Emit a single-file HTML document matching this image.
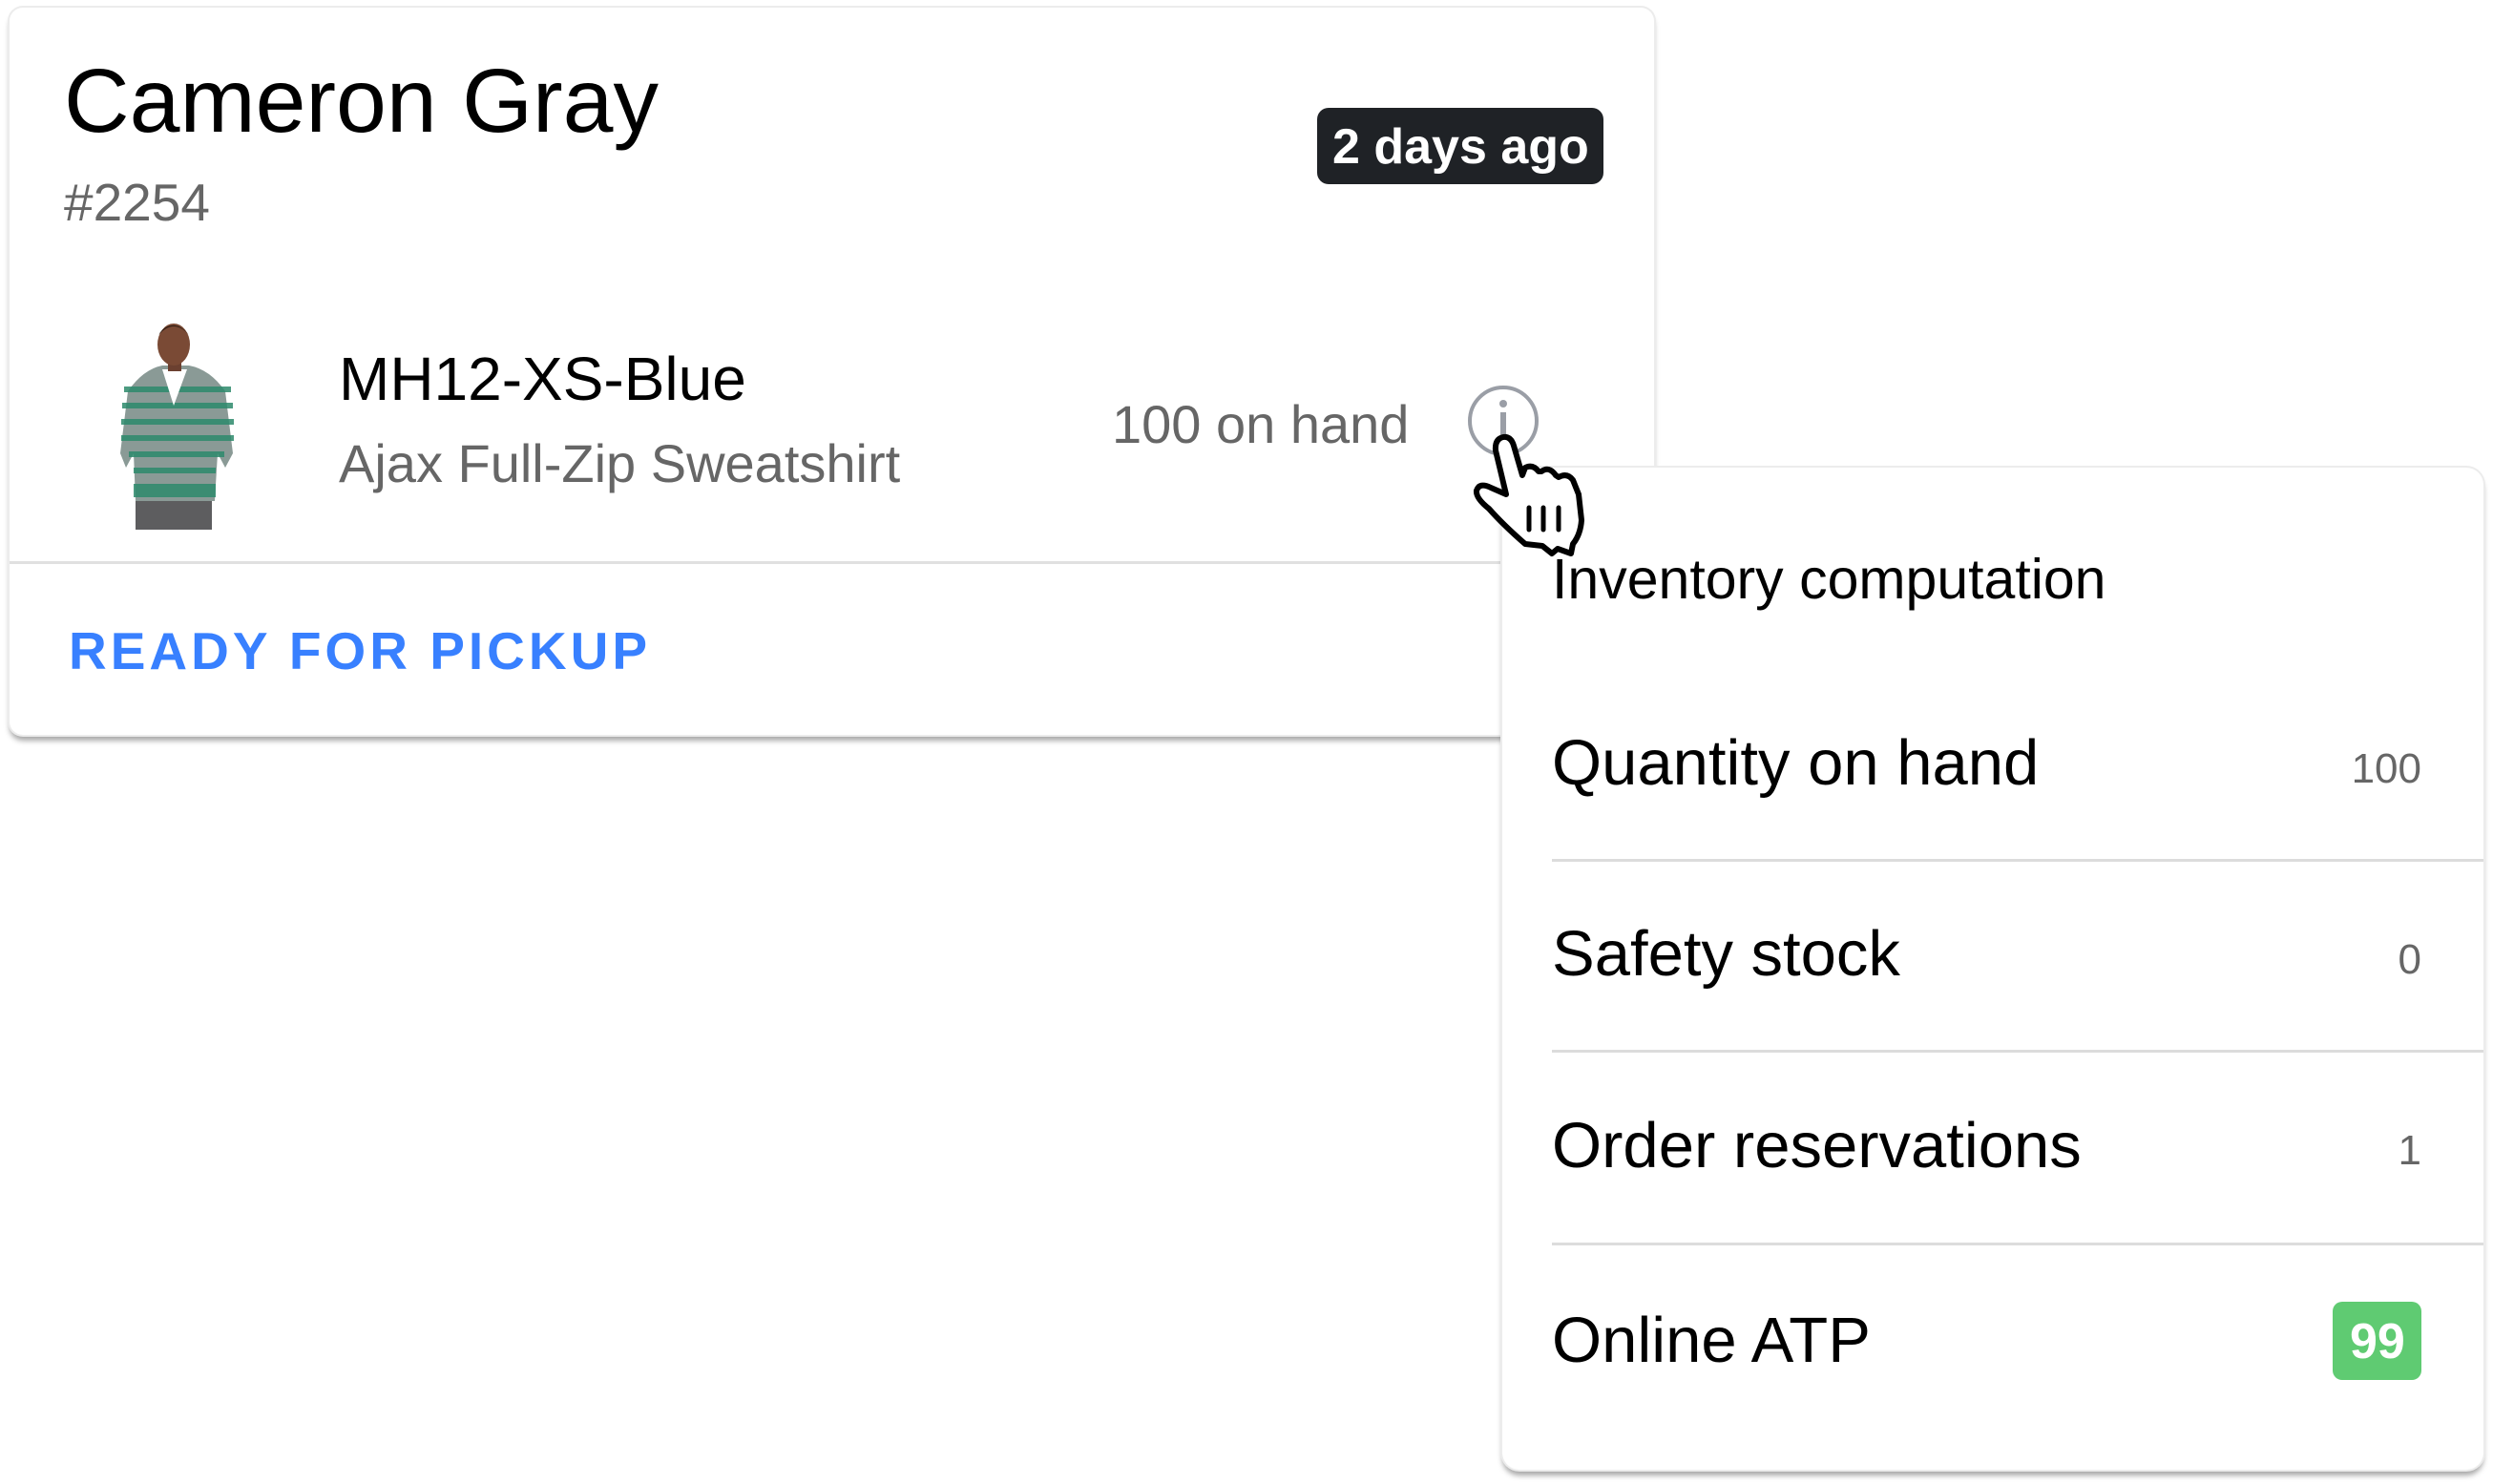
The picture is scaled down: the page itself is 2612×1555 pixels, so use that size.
<!DOCTYPE html>
<html><head><meta charset="utf-8"><style>
*{margin:0;padding:0;box-sizing:border-box}
body{width:2612px;height:1555px;background:#fff;position:relative;overflow:hidden;font-family:"Liberation Sans",Arial,sans-serif}
.card{position:absolute;left:10px;top:8px;width:1723px;height:762px;background:#fff;border-radius:14px;box-shadow:0 0 0 2px #ececec,0 6px 6px rgba(0,0,0,.35)}
.t{position:absolute;white-space:nowrap;line-height:1}
.pop{position:absolute;left:1574px;top:490px;width:1028px;height:1050px;background:#fff;border-radius:18px;box-shadow:0 0 0 2px #ececec,0 6px 6px rgba(0,0,0,.35)}
.hr{position:absolute;left:1626px;width:976px;height:3px;background:#dcdcdc}
</style></head><body>
<div class="card"></div>
<div class="t" style="left:67px;top:59px;font-size:95px;color:#000">Cameron Gray</div>
<div class="t" style="left:67px;top:185px;font-size:55px;color:#666">#2254</div>
<div style="position:absolute;left:1380px;top:113px;width:300px;height:80px;background:#1f2226;border-radius:12px"></div>
<div class="t" style="left:1396px;top:128px;font-size:52px;font-weight:bold;color:#fff">2 days ago</div>
<svg style="position:absolute;left:110px;top:325px" width="150" height="240" viewBox="0 0 150 240">
<rect x="32" y="198" width="80" height="32" fill="#5d5d5f"/>
<path d="M24 85 Q40 62 60 58 L88 58 Q110 62 126 85 L134 150 L126 165 L118 150 L115 200 L32 200 L30 150 L22 165 L16 150 Z" fill="#8a9a96"/>
<g fill="#2d8a6c" opacity=".85"><rect x="20" y="80" width="112" height="6"/><rect x="18" y="97" width="116" height="6"/><rect x="17" y="114" width="118" height="6"/><rect x="17" y="131" width="118" height="6"/><rect x="25" y="148" width="100" height="6"/><rect x="30" y="165" width="86" height="6"/><rect x="30" y="182" width="86" height="14"/></g>
<path d="M60 62 L72 100 L86 62 Z" fill="#fff"/>
<rect x="66" y="50" width="14" height="14" fill="#6b4030"/>
<ellipse cx="72" cy="36" rx="17" ry="22" fill="#7a4a35"/>
<path d="M56 26 Q72 8 88 26 Q80 16 72 16 Q62 16 56 26Z" fill="#2b1a12"/>
</svg>
<div class="t" style="left:355px;top:365px;font-size:64px;color:#000">MH12-XS-Blue</div>
<div class="t" style="left:355px;top:458px;font-size:56px;color:#666">Ajax Full-Zip Sweatshirt</div>
<div class="t" style="left:1165px;top:417px;font-size:56px;color:#666">100 on hand</div>
<svg style="position:absolute;left:1530px;top:398px" width="90" height="90"><circle cx="45" cy="43" r="35" fill="none" stroke="#9a9ea6" stroke-width="4"/><circle cx="45" cy="25" r="4" fill="#9a9ea6"/><rect x="42" y="34" width="6" height="28" fill="#9a9ea6"/></svg>
<div style="position:absolute;left:10px;top:588px;width:1723px;height:3px;background:#e0e0e0"></div>
<div class="t" style="left:72px;top:655px;font-size:55px;color:#3880ff;letter-spacing:4px;font-weight:bold">READY FOR PICKUP</div>

<div class="pop"></div>
<div class="t" style="left:1626px;top:578px;font-size:59px;color:#000">Inventory computation</div>
<div class="t" style="left:1626px;top:766px;font-size:67px;color:#000">Quantity on hand</div>
<div class="t" style="right:75px;top:784px;font-size:44px;color:#666">100</div>
<div class="hr" style="top:900px"></div>
<div class="t" style="left:1626px;top:966px;font-size:67px;color:#000">Safety stock</div>
<div class="t" style="right:75px;top:984px;font-size:44px;color:#666">0</div>
<div class="hr" style="top:1100px"></div>
<div class="t" style="left:1626px;top:1167px;font-size:67px;color:#000">Order reservations</div>
<div class="t" style="right:75px;top:1184px;font-size:44px;color:#666">1</div>
<div class="hr" style="top:1302px"></div>
<div class="t" style="left:1626px;top:1371px;font-size:67px;color:#000">Online ATP</div>
<div style="position:absolute;left:2444px;top:1364px;width:93px;height:82px;background:#5fcb72;border-radius:10px"></div>
<div class="t" style="left:2462px;top:1380px;font-size:52px;font-weight:bold;color:#fff">99</div>

<svg style="position:absolute;left:1520px;top:390px" width="180" height="200" viewBox="0 0 180 200">
<path d="M58 128 L47 82 Q46 70 55 68 Q63 67 66 77 L75 108 L78 100 Q86 96 92 104 L95 104 Q103 98 110 108 L113 110 Q122 105 128 113 L134 128 L137 155 Q136 170 128 180 L126 190 L112 185 L106 190 L96 182 L78 180 Q55 160 40 143 Q26 132 27 124 Q30 115 42 121 Z" fill="#fff" stroke="#000" stroke-width="6" stroke-linejoin="round"/>
<g stroke="#000" stroke-width="5" stroke-linecap="round"><line x1="82" y1="142" x2="82" y2="165"/><line x1="97" y1="142" x2="97" y2="165"/><line x1="113" y1="142" x2="113" y2="165"/></g>
</svg>
</body></html>
